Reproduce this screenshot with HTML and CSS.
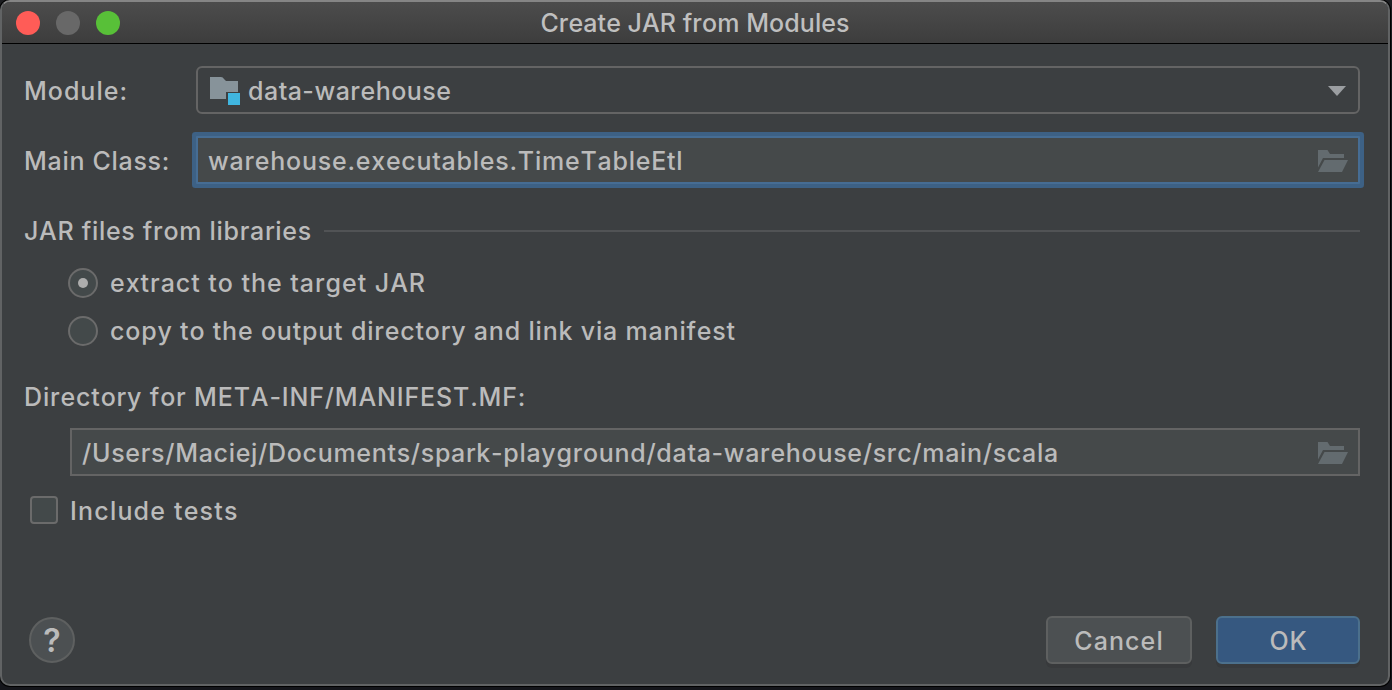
FILE: index.html
```html
<!DOCTYPE html>
<html lang="en">
<head>
<meta charset="utf-8">
<title>Create JAR from Modules</title>
<link rel="stylesheet" href="styles.css">
</head>
<body>
<main class="dialog">
  <header class="titlebar">
    <div class="lights"><i class="light close"></i><i class="light minimize"></i><i class="light maximize"></i></div>
    <h1 class="title">Create JAR from Modules</h1>
  </header>
  <section class="content">
    <div class="row module-row">
      <label class="label t-module">Module:</label>
      <div class="combo">
        <svg class="module-icon" width="32" height="32" viewBox="0 0 32 32"><path fill="#87939a" d="M1 4h11q2 0 3 2l2 2h12v11H17v7H1z"/><path fill="#40b6e0" d="M19 20h12v12H19z"/></svg>
        <span class="t-combo">data-warehouse</span>
        <svg class="arrow" width="18" height="10" viewBox="0 0 18 10"><path fill="#9b9ea1" d="M0 0h18L9 10z"/></svg>
      </div>
    </div>
    <div class="row class-row">
      <label class="label t-class">Main Class:</label>
      <div class="field focused">
        <span class="t-etl">warehouse.executables.TimeTableEtl</span>
        <svg class="browse" width="30" height="22" viewBox="0 0 30 22"><path fill="#636b6f" d="M0 0h9.500l2.500 4h14v4H5L0 17.500z"/><path fill="#636b6f" d="M6.500 10H30l-6 12H0z"/></svg>
      </div>
    </div>
    <div class="row section"><span class="t-section">JAR files from libraries</span><i class="rule"></i></div>
    <div class="row option"><i class="radio checked"></i><label class="t-extract">extract to the target JAR</label></div>
    <div class="row option"><i class="radio"></i><label class="t-copy">copy to the output directory and link via manifest</label></div>
    <div class="row directory"><label class="t-directory">Directory for META-INF/MANIFEST.MF:</label></div>
    <div class="field path">
      <span class="t-path">/Users/Maciej/Documents/spark-playground/data-warehouse/src/main/scala</span>
      <svg class="browse" width="30" height="22" viewBox="0 0 30 22"><path fill="#636b6f" d="M0 0h9.500l2.500 4h14v4H5L0 17.500z"/><path fill="#636b6f" d="M6.500 10H30l-6 12H0z"/></svg>
    </div>
    <div class="row include"><i class="checkbox"></i><label class="t-include">Include tests</label></div>
  </section>
  <footer class="actions">
    <button class="help">?</button>
    <button class="button cancel">Cancel</button>
    <button class="button ok">OK</button>
  </footer>
</main>
</body>
</html>
```
FILE: styles.css
```css
* { box-sizing: border-box; }
body {
  margin: 0;
  height: 690px;
  overflow: hidden;
  background: linear-gradient(#1c1d20, #15161b);
  font: 500 25px/30px Inter, "Liberation Sans", sans-serif;
  font-kerning: none;
  letter-spacing: 0.7px;
  color: #bbbbbb;
}
.dialog {
  width: 1390px;
  height: 686px;
  display: flex;
  flex-direction: column;
  border: 2px solid #616364;
  border-top-color: #858585;
  border-radius: 10px;
  background: #3c3f41;
  box-shadow: 0 0 0 1px #000;
  overflow: hidden;
}
.titlebar {
  height: 42px;
  flex: none;
  display: grid;
  grid-template-columns: 200px 1fr 200px;
  align-items: center;
  background: linear-gradient(#4c4c4c, #3d3d3d);
  border-bottom: 1px solid #000;
}
.lights { display: flex; gap: 16px; padding-left: 14px; }
.light { width: 24px; height: 24px; border-radius: 50%; }
.close { background: #ff5c57; }
.minimize { background: #686868; }
.maximize { background: #58c038; }
.title { margin: 0; text-align: center; font-size: 25px; font-weight: 500; letter-spacing: 0.06px; color: #bfbfbf; }
.content { flex: 1; padding: 22px 28px 0 22px; }
.row { display: flex; align-items: center; white-space: nowrap; }
.module-row { height: 48px; }
.label { width: 172px; flex: none; padding-top: 2px; }
.t-combo, .t-etl, .t-path, .t-include { padding-top: 2px; }
.t-module { letter-spacing: 1px; }
.t-combo { letter-spacing: 0.5px; }
.t-etl { letter-spacing: 0.76px; }
.t-extract { letter-spacing: 0.97px; }
.t-copy { letter-spacing: 0.81px; }
.t-directory { letter-spacing: 0.84px; }
.t-include { letter-spacing: 1.2px; }
.combo {
  flex: 1;
  height: 48px;
  display: flex;
  align-items: center;
  border: 2px solid #646464;
  border-radius: 6px;
  padding: 0 12px 0 10px;
}
.module-icon { margin: -2px 7px 0 1px; }
.arrow { margin: 2px 0 0 auto; }
.class-row { height: 48px; margin-top: 22px; }
.field {
  height: 48px;
  display: flex;
  align-items: center;
  justify-content: space-between;
  background: #45494a;
  border: 2px solid #646464;
  padding: 0 10px;
  white-space: nowrap;
}
.focused { flex: 1; border-color: #466d94; box-shadow: 0 0 0 4px #3d6185; border-radius: 1px; }
.browse { margin-top: 2px; }
.section { height: 30px; margin-top: 32px; }
.t-section { width: 300px; }
.rule { flex: 1; height: 2px; background: #515355; }
.option { height: 48px; padding-left: 44px; gap: 12px; }
.section + .option { margin-top: 13px; }
.radio {
  width: 30px;
  height: 30px;
  display: grid;
  place-items: center;
  border: 2px solid #6b6b6b;
  border-radius: 50%;
  background: #43494a;
}
.checked::after { content: ""; width: 10px; height: 10px; border-radius: 50%; background: #adadad; }
.directory { height: 30px; margin-top: 27px; }
.path { margin: 16px 0 0 46px; }
.include { height: 28px; margin-top: 20px; padding-left: 6px; gap: 12px; }
.checkbox { width: 28px; height: 28px; border: 2px solid #6b6b6b; border-radius: 4px; background: #43494a; }
.actions { height: 68px; flex: none; display: flex; align-items: flex-start; padding: 0 28px 0 27px; }
button { font: inherit; letter-spacing: inherit; color: #bbbbbb; padding: 2px 0 0; }
.help {
  width: 46px;
  height: 46px;
  margin: 1px auto 0 0;
  border: 2px solid #5e6060;
  border-radius: 50%;
  background: #4c5052;
  font-size: 32px;
  font-weight: 600;
  letter-spacing: 0;
}
.button { height: 48px; border: 2px solid #5e6060; border-radius: 6px; background: #4c5052; box-shadow: 0 4px 0 #383a3c; }
.cancel { width: 146px; letter-spacing: 1.1px; }
.ok { width: 144px; margin-left: 24px; padding-left: 1px; background: #365880; border-color: #4c708c; }
```
